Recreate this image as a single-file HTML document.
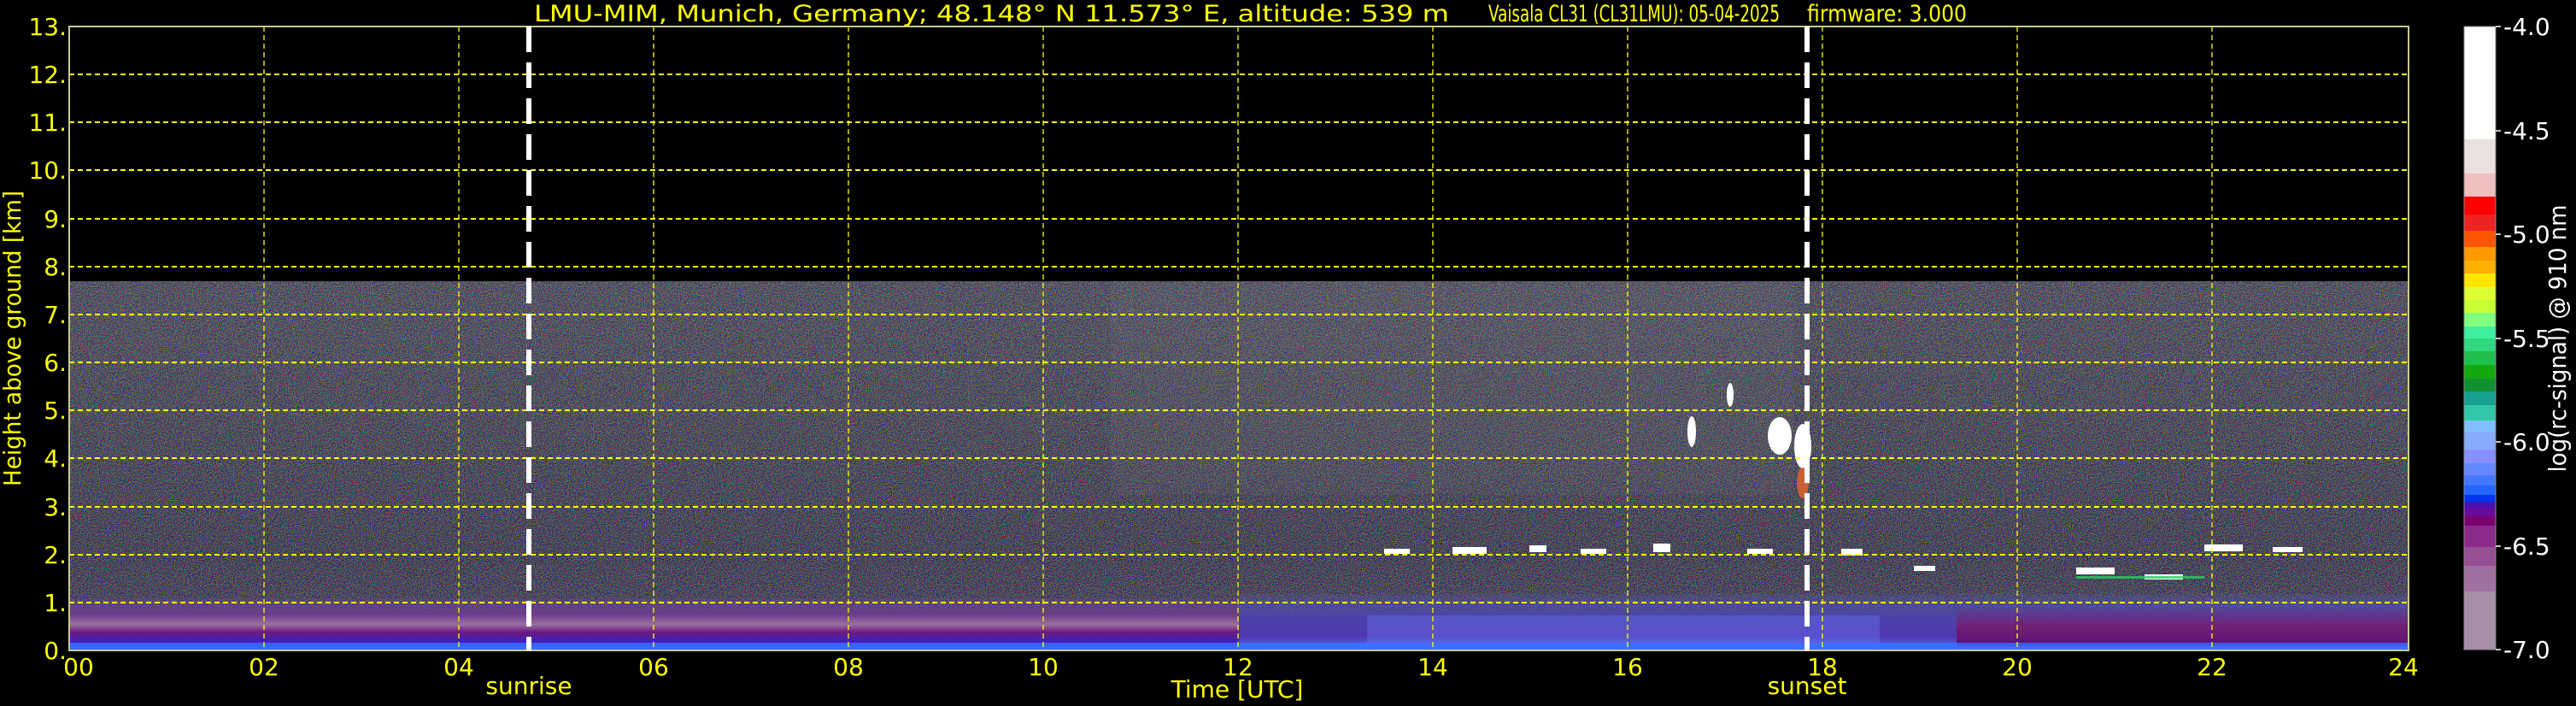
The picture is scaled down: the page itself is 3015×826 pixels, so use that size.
<!DOCTYPE html>
<html><head><meta charset="utf-8"><style>
html,body{margin:0;padding:0;background:#000;width:3015px;height:826px;overflow:hidden}
svg{display:block}
text{font-family:"DejaVu Sans","Liberation Sans",sans-serif}
</style></head><body>
<svg width="3015" height="826" viewBox="0 0 3015 826" xmlns="http://www.w3.org/2000/svg">
<defs>
<filter id="nz" x="0" y="0" width="100%" height="100%">
<feTurbulence type="fractalNoise" baseFrequency="0.9" numOctaves="2" seed="3" result="t"/>
<feColorMatrix in="t" type="matrix" values="5 -2 -2 0 -0.4  -2 5 -2 0 -0.4  -2 -2 5 0 -0.3  0 0 0 0 1"/>
</filter>
<linearGradient id="bg" x1="0" y1="0" x2="0" y2="1">
<stop offset="0" stop-color="#464454"/>
<stop offset="0.4" stop-color="#3a3848"/>
<stop offset="0.75" stop-color="#2a263e"/>
<stop offset="1" stop-color="#3a2e56"/>
</linearGradient>
<linearGradient id="pbl" x1="0" y1="0" x2="0" y2="1">
<stop offset="0" stop-color="#6a4a8a" stop-opacity="0.3"/>
<stop offset="0.3" stop-color="#6a3a8a"/>
<stop offset="0.5" stop-color="#9a70a0"/>
<stop offset="0.65" stop-color="#6a1a80"/>
<stop offset="0.85" stop-color="#3a20c0"/>
<stop offset="1" stop-color="#3070ff"/>
</linearGradient>
<linearGradient id="pbl2" x1="0" y1="0" x2="0" y2="1">
<stop offset="0" stop-color="#5a5ab0" stop-opacity="0.2"/>
<stop offset="0.4" stop-color="#4a44a8"/>
<stop offset="0.75" stop-color="#5238b0"/>
<stop offset="1" stop-color="#4a78ff"/>
</linearGradient>
<linearGradient id="pbl3" x1="0" y1="0" x2="0" y2="1">
<stop offset="0" stop-color="#7a2a80" stop-opacity="0.2"/>
<stop offset="0.5" stop-color="#702070"/>
<stop offset="1" stop-color="#5a1080"/>
</linearGradient>
</defs>

<rect x="81" y="329" width="2738" height="432" fill="url(#bg)"/>
<rect x="81" y="329" width="2738" height="432" filter="url(#nz)" opacity="0.55"/>
<rect x="1300" y="329" width="800" height="250" fill="#9a9a9a" opacity="0.08"/>
<rect x="81" y="700" width="1370" height="61" fill="url(#pbl)"/>
<rect x="1450" y="695" width="1370" height="66" fill="url(#pbl2)"/>
<rect x="2290" y="712" width="529" height="44" fill="url(#pbl3)"/>
<rect x="1600" y="720" width="600" height="36" fill="#6a7aff" opacity="0.35"/>
<rect x="81" y="752" width="2738" height="9" fill="#3a70ff" opacity="0.8"/>
<g fill="#fff">
<rect x="1620" y="642" width="30" height="6"/><rect x="1700" y="640" width="40" height="8"/>
<rect x="1790" y="638" width="20" height="8"/><rect x="1850" y="642" width="30" height="6"/>
<rect x="1935" y="636" width="20" height="10"/><rect x="2045" y="642" width="30" height="6"/>
<rect x="2155" y="642" width="25" height="8"/><rect x="2240" y="662" width="25" height="6"/>
<rect x="2430" y="664" width="45" height="8"/><rect x="2510" y="672" width="45" height="6"/>
<rect x="2580" y="637" width="45" height="8"/><rect x="2660" y="640" width="35" height="6"/>
<ellipse cx="2083" cy="510" rx="14" ry="22"/><ellipse cx="2110" cy="522" rx="10" ry="26"/>
<ellipse cx="1980" cy="505" rx="5" ry="18"/><ellipse cx="2025" cy="462" rx="4" ry="14"/>
</g>
<ellipse cx="2110" cy="565" rx="7" ry="18" fill="#ff6a20" opacity="0.7"/>
<rect x="2430" y="674" width="150" height="3" fill="#20d060" opacity="0.8"/>

<g stroke="#ffff00" stroke-width="2" stroke-dasharray="6,4" fill="none">
<path d="M81 31H2819M81 87H2819M81 143H2819M81 199H2819M81 256H2819M81 312H2819M81 368H2819M81 424H2819M81 480H2819M81 536H2819M81 593H2819M81 649H2819M81 705H2819"/>
</g>
<g stroke="#ffff00" stroke-width="1.3" stroke-dasharray="6,4" fill="none">
<path d="M309 31V761M537 31V761M765 31V761M993 31V761M1221 31V761M1449 31V761M1677 31V761M1905 31V761M2133 31V761M2361 31V761M2589 31V761"/>
</g>
<rect x="81" y="31" width="2738" height="730" fill="none" stroke="#c8c890" stroke-width="2"/>
<g stroke="#fff" stroke-width="6" stroke-dasharray="30,12">
<path d="M619 31V761M2115 31V761"/>
</g>

<g font-size="27" fill="#ffff00">
<text x="625" y="25" textLength="1071" lengthAdjust="spacingAndGlyphs">LMU-MIM, Munich, Germany; 48.148° N 11.573° E, altitude: 539 m</text>
<text x="1742" y="25" textLength="341" lengthAdjust="spacingAndGlyphs">Vaisala CL31 (CL31LMU): 05-04-2025</text>
<text x="2115" y="25" textLength="187" lengthAdjust="spacingAndGlyphs">firmware: 3.000</text>
</g>

<g font-size="28" fill="#ffff00" text-anchor="end">
<text x="78" y="41">13.</text><text x="78" y="97">12.</text><text x="78" y="153">11.</text>
<text x="78" y="209">10.</text><text x="78" y="266">9.</text><text x="78" y="322">8.</text>
<text x="78" y="378">7.</text><text x="78" y="434">6.</text><text x="78" y="490">5.</text>
<text x="78" y="546">4.</text><text x="78" y="603">3.</text><text x="78" y="659">2.</text>
<text x="78" y="715">1.</text><text x="78" y="771">0.</text>
</g>
<text transform="translate(24,396) rotate(-90)" font-size="28" fill="#ffff00" text-anchor="middle" textLength="346" lengthAdjust="spacingAndGlyphs">Height above ground [km]</text>

<g font-size="28" fill="#ffff00" text-anchor="middle">
<text x="92" y="790">00</text><text x="309" y="790">02</text><text x="537" y="790">04</text>
<text x="765" y="790">06</text><text x="993" y="790">08</text><text x="1221" y="790">10</text>
<text x="1449" y="790">12</text><text x="1677" y="790">14</text><text x="1905" y="790">16</text>
<text x="2133" y="790">18</text><text x="2361" y="790">20</text><text x="2589" y="790">22</text>
<text x="2813" y="790">24</text>
<text x="1448" y="816">Time [UTC]</text>
<text x="619" y="812">sunrise</text>
<text x="2115" y="812">sunset</text>
</g>

<g>
<rect x="2884" y="31" width="37" height="132" fill="#ffffff"/>
<rect x="2884" y="163" width="37" height="40" fill="#eae0e0"/>
<rect x="2884" y="203" width="37" height="27" fill="#f0c0c0"/>
<rect x="2884" y="230" width="37" height="21" fill="#ff0000"/>
<rect x="2884" y="251" width="37" height="19" fill="#ee2222"/>
<rect x="2884" y="270" width="37" height="19" fill="#ff5500"/>
<rect x="2884" y="289" width="37" height="16" fill="#ff9900"/>
<rect x="2884" y="305" width="37" height="15" fill="#ffb000"/>
<rect x="2884" y="320" width="37" height="16" fill="#ffe600"/>
<rect x="2884" y="336" width="37" height="15" fill="#ddff33"/>
<rect x="2884" y="351" width="37" height="15" fill="#c8ff33"/>
<rect x="2884" y="366" width="37" height="16" fill="#80ff80"/>
<rect x="2884" y="382" width="37" height="14" fill="#40eea0"/>
<rect x="2884" y="396" width="37" height="15" fill="#30d880"/>
<rect x="2884" y="411" width="37" height="16" fill="#20c050"/>
<rect x="2884" y="427" width="37" height="16" fill="#15a810"/>
<rect x="2884" y="443" width="37" height="15" fill="#109030"/>
<rect x="2884" y="458" width="37" height="16" fill="#18a090"/>
<rect x="2884" y="474" width="37" height="18" fill="#30c8a8"/>
<rect x="2884" y="492" width="37" height="14" fill="#80c0ff"/>
<rect x="2884" y="506" width="37" height="20" fill="#88aaff"/>
<rect x="2884" y="526" width="37" height="16" fill="#8890ff"/>
<rect x="2884" y="542" width="37" height="14" fill="#6688ff"/>
<rect x="2884" y="556" width="37" height="12" fill="#4477ff"/>
<rect x="2884" y="568" width="37" height="11" fill="#2266ff"/>
<rect x="2884" y="579" width="37" height="8" fill="#0033ee"/>
<rect x="2884" y="587" width="37" height="8" fill="#4a10b0"/>
<rect x="2884" y="595" width="37" height="9" fill="#6a0a98"/>
<rect x="2884" y="604" width="37" height="11" fill="#7a0070"/>
<rect x="2884" y="615" width="37" height="25" fill="#8a2a8a"/>
<rect x="2884" y="640" width="37" height="22" fill="#954f95"/>
<rect x="2884" y="662" width="37" height="30" fill="#a070a0"/>
<rect x="2884" y="692" width="37" height="68" fill="#a890a8"/>
<rect x="2884" y="31" width="37" height="729" fill="none" stroke="#888" stroke-width="1"/>
</g>
<g stroke="#fff" stroke-width="1.5">
<path d="M2921 31h6M2921 153h6M2921 274h6M2921 396h6M2921 517h6M2921 639h6M2921 760h6"/>
</g>
<g font-size="28" fill="#fff">
<text x="2930" y="41">-4.0</text><text x="2930" y="163">-4.5</text><text x="2930" y="284">-5.0</text>
<text x="2930" y="406">-5.5</text><text x="2930" y="527">-6.0</text><text x="2930" y="649">-6.5</text>
<text x="2930" y="770">-7.0</text>
</g>
<text transform="translate(3003,396) rotate(-90)" font-size="28" fill="#fff" text-anchor="middle" textLength="313" lengthAdjust="spacingAndGlyphs">log(rc-signal) @ 910 nm</text>
</svg>
</body></html>
